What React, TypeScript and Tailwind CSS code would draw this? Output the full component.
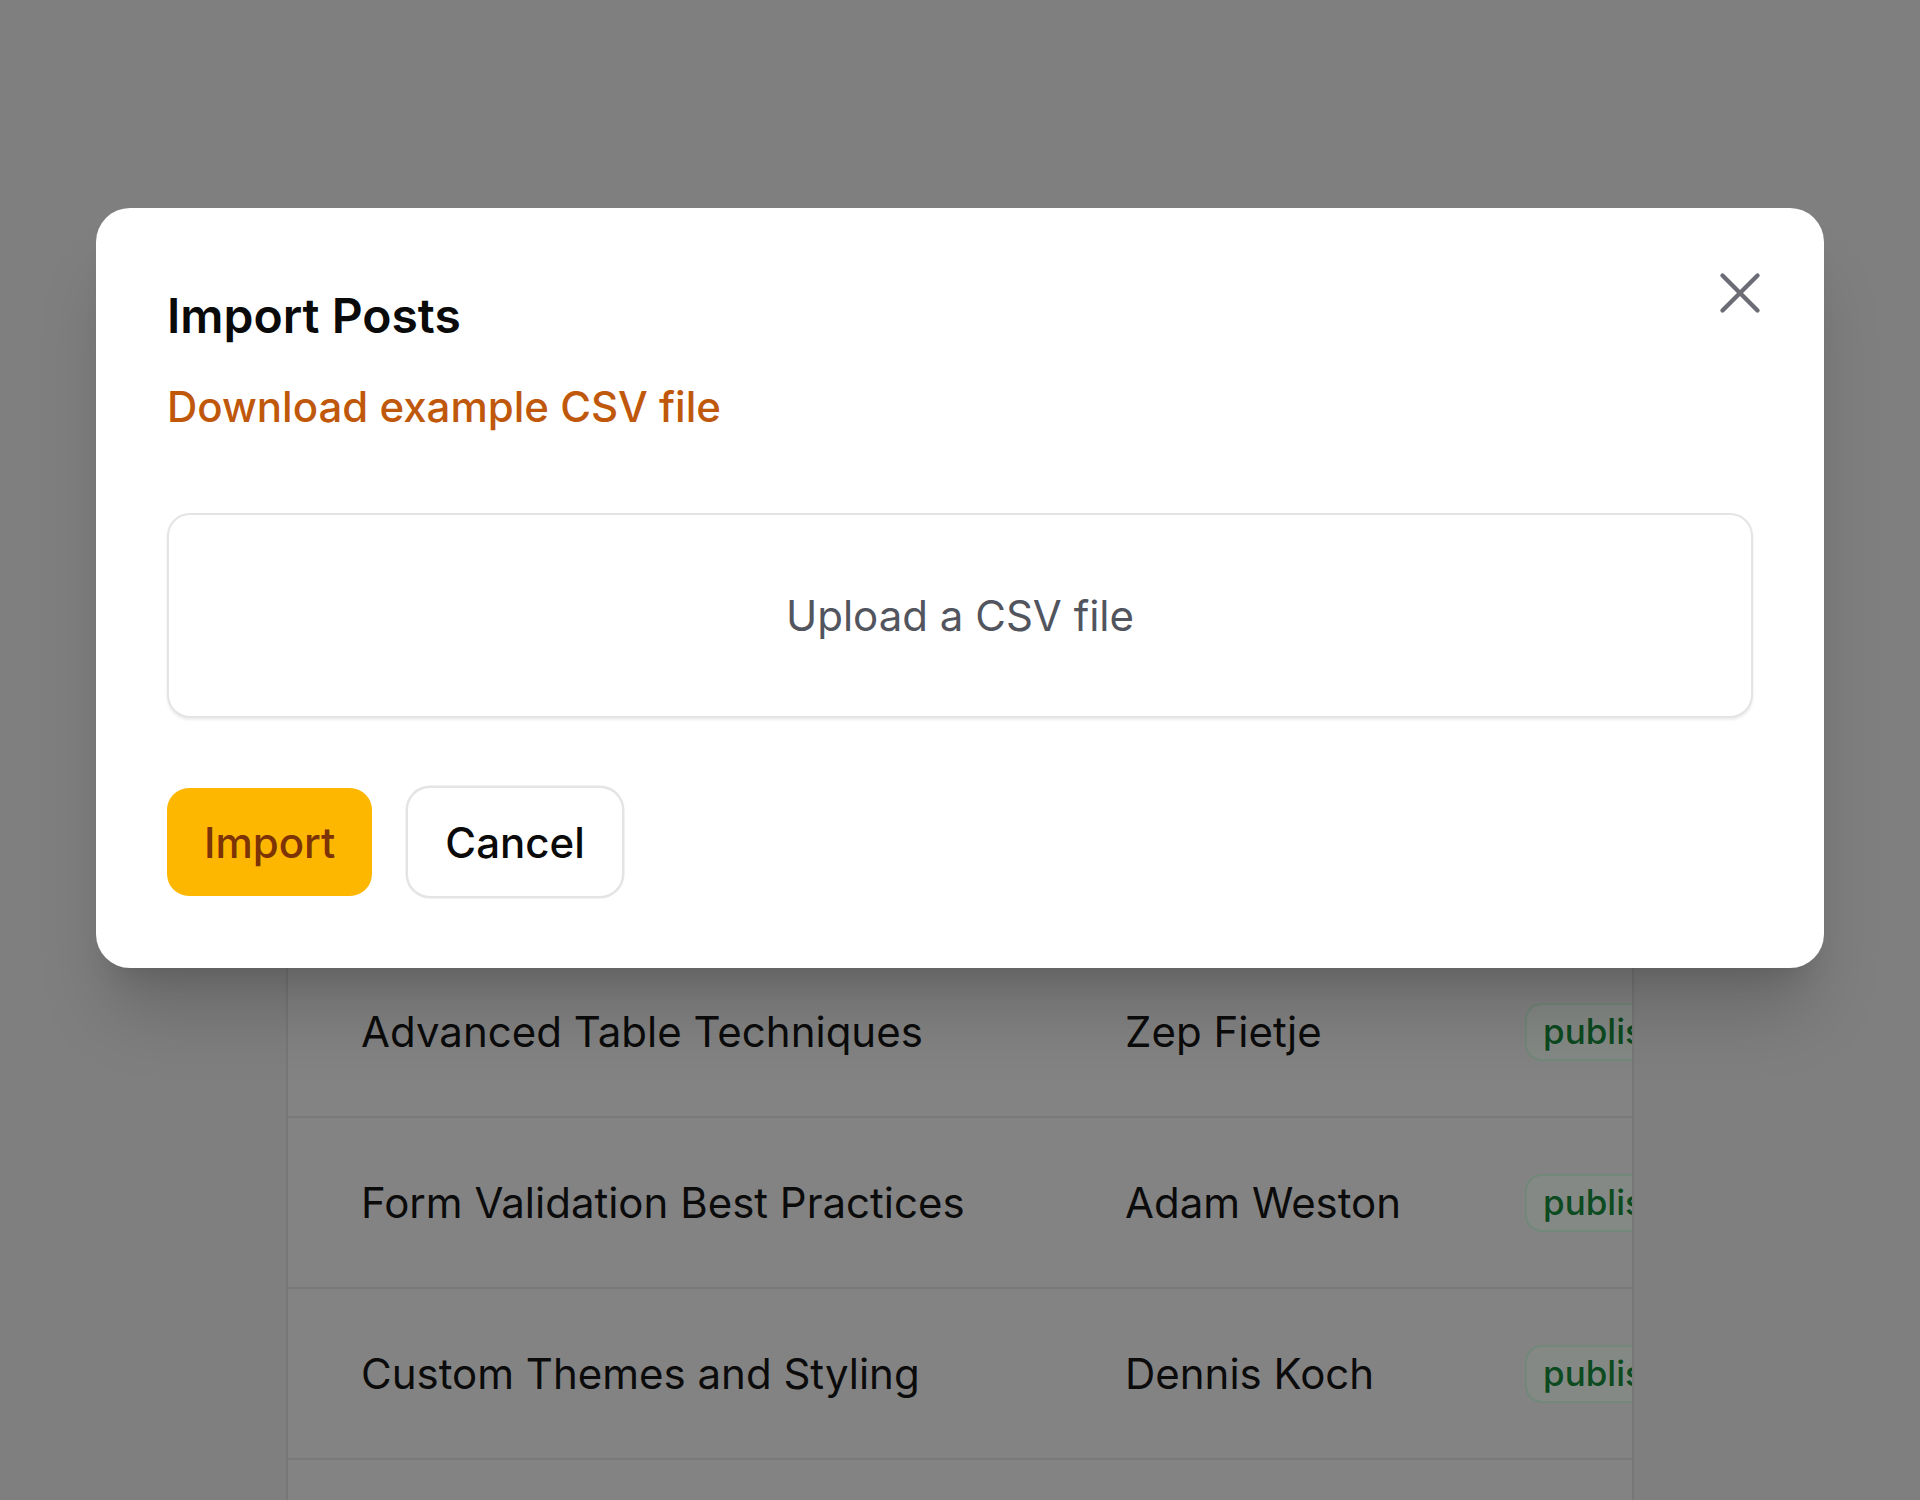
import React from "react";

type Row = { title: string; author: string };

const rows: Row[] = [
  { title: "Getting Started with Filament", author: "Dan Harrin" },
  { title: "Building Custom Widgets", author: "Ryan Chandler" },
  { title: "Advanced Table Techniques", author: "Zep Fietje" },
  { title: "Form Validation Best Practices", author: "Adam Weston" },
  { title: "Custom Themes and Styling", author: "Dennis Koch" },
  { title: "Working with Relationships", author: "Hassan Zahirnia" },
];

export default function App() {
  return (
    <div className="relative w-[1920px] h-[1500px] overflow-hidden bg-[#7f7f7f] font-['Inter','Noto_Sans',sans-serif]">
      {/* background table */}
      <div className="pt-[605px] pl-[286px]">
        <div className="w-[1348px] border-x-2 border-[#777777] bg-[#838383] overflow-hidden">
          {rows.map((r) => (
            <div
              key={r.title}
              className="flex h-[171px] items-center border-b-2 border-[#797979] whitespace-nowrap"
            >
              <div className="w-[837px] shrink-0 pl-[73px] text-[42px] leading-[56px] text-[#0b0b0b]">
                {r.title}
              </div>
              <div className="w-[400px] shrink-0 text-[42px] leading-[56px] text-[#0b0b0b]">
                {r.author}
              </div>
              <div className="shrink-0">
                <span className="inline-flex h-[58px] items-center rounded-[17px] border-2 border-[#71887a] bg-[#858986] px-[16px] text-[35px] font-medium text-[#0c4a20]">
                  published
                </span>
              </div>
            </div>
          ))}
        </div>
      </div>

      {/* modal */}
      <div className="absolute left-[96px] top-[208px] w-[1728px] rounded-[34px] bg-white px-[71px] pt-[74px] pb-[72px] shadow-[0_57px_71px_-14px_rgba(0,0,0,0.18),0_23px_28px_-17px_rgba(0,0,0,0.12)]">
        <button className="absolute right-[49px] top-[50px] h-[70px] w-[70px] text-[#6b6c76]">
          <svg viewBox="0 0 24 24" fill="none" stroke="currentColor" strokeWidth={1.5} strokeLinecap="round" strokeLinejoin="round" className="h-[70px] w-[70px]">
            <path d="M6 18 18 6M6 6l12 12" />
          </svg>
        </button>

        <h2 className="text-[48px] leading-[67px] font-semibold text-[#0a0a0a]">Import Posts</h2>
        <div className="mt-[30px] text-[42px] leading-[56px] font-medium text-[#c0580c]">
          Download example CSV file
        </div>

        <div className="mt-[78px] flex h-[205px] items-center justify-center rounded-[23px] border-2 border-[#e4e4e4] bg-white shadow-[0_2px_3px_rgba(0,0,0,0.08)]">
          <span className="text-[42px] leading-[56px] text-[#52555e]">Upload a CSV file</span>
        </div>

        <div className="mt-[70px] flex items-center gap-[36px]">
          <button className="flex h-[108px] items-center rounded-[22px] bg-[#fdb700] px-[37px] text-[42px] font-medium text-[#7c3306]">
            Import
          </button>
          <button className="flex h-[108px] items-center rounded-[22px] bg-white px-[37px] text-[42px] font-medium text-[#0a0a0a] shadow-[0_0_0_2.5px_#e4e4e4]">
            Cancel
          </button>
        </div>
      </div>
    </div>
  );
}
